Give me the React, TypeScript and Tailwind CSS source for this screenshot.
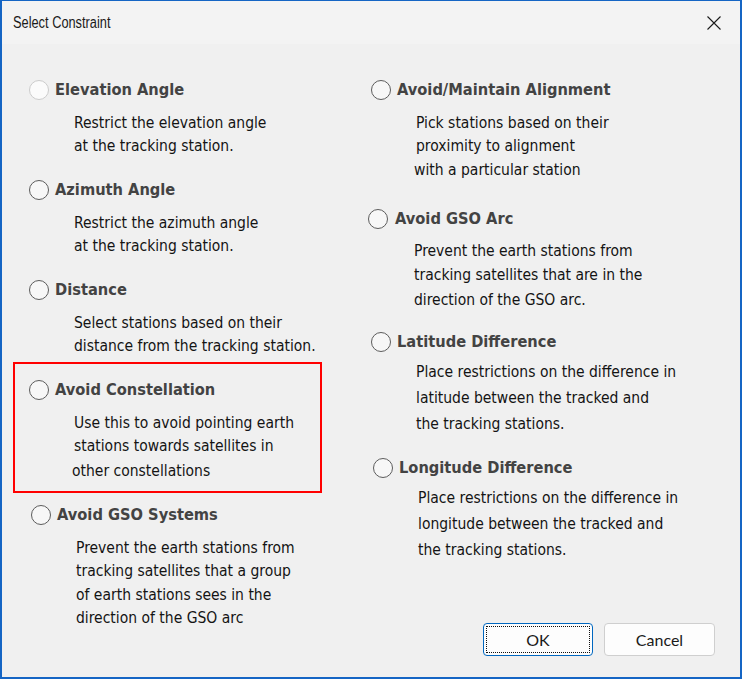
const body = "font-['DejaVu_Sans_Condensed','Liberation_Sans',sans-serif]";

function Radio({ disabled }: { disabled?: boolean }) {
  return (
    <span
      className={
        disabled
          ? "block w-[20px] h-[20px] shrink-0 rounded-full border border-[#cccccc] bg-[#fbfbfb]"
          : "block w-[20px] h-[20px] shrink-0 rounded-full border-[1.5px] border-[#5c5c5c] bg-[#f7f7f7]"
      }
    />
  );
}

function Title({ text, disabled, gap }: { text: string; disabled?: boolean; gap: string }) {
  return (
    <div className={`flex items-center h-[20px] ${gap}`}>
      <Radio disabled={disabled} />
      <span className="text-[16.3px] font-bold text-[#434343] whitespace-nowrap">{text}</span>
    </div>
  );
}

export default function App() {
  return (
    <div className={`w-[742px] h-[679px] flex flex-col bg-[#f0f0f0] border-t border-x-2 border-b-2 border-[#1565c4] ${body}`}>
      <div className="h-[43px] shrink-0 bg-[#f3f3f3] flex items-center justify-between pl-[11px] pr-[18px]">
        <span className="inline-block origin-left scale-x-[0.8] font-['Liberation_Sans',sans-serif] text-[16px] text-[#1a1a1a] whitespace-nowrap">
          Select Constraint
        </span>
        <svg width="16" height="16" viewBox="0 0 16 16" className="text-[#1a1a1a]">
          <path d="M1.5 1.5 L14.5 14.5 M14.5 1.5 L1.5 14.5" stroke="currentColor" strokeWidth="1.1" fill="none" />
        </svg>
      </div>

      <div className="flex flex-1 text-[15.5px] text-[#141414]">
        {/* left column */}
        <div className="relative w-[340px] pl-[27px]">
          <div className="mt-[36px]">
            <Title text="Elevation Angle" disabled gap="gap-[6px]" />
            <div className="mt-[12px] pl-[45px] leading-[23px]">
              <div>Restrict the elevation angle</div>
              <div>at the tracking station.</div>
            </div>
          </div>

          <div className="mt-[22px]">
            <Title text="Azimuth Angle" gap="gap-[6px]" />
            <div className="mt-[12px] pl-[45px] leading-[23px]">
              <div>Restrict the azimuth angle</div>
              <div>at the tracking station.</div>
            </div>
          </div>

          <div className="mt-[22px]">
            <Title text="Distance" gap="gap-[6px]" />
            <div className="mt-[12px] pl-[45px] leading-[23px]">
              <div>Select stations based on their</div>
              <div>distance from the tracking station.</div>
            </div>
          </div>

          <div className="mt-[22px]">
            <Title text="Avoid Constellation" gap="gap-[6px]" />
            <div className="mt-[12px] leading-[23px]">
              <div className="pl-[45px]">Use this to avoid pointing earth</div>
              <div className="pl-[45px]">stations towards satellites in</div>
              <div className="pl-[43px] leading-[27px]">other constellations</div>
            </div>
          </div>

          <div className="mt-[20px] pl-[2px]">
            <Title text="Avoid GSO Systems" gap="gap-[6px]" />
            <div className="mt-[12px] pl-[45px] leading-[23.7px]">
              <div className="leading-[23px]">Prevent the earth stations from</div>
              <div>tracking satellites that a group</div>
              <div>of earth stations sees in the</div>
              <div>direction of the GSO arc</div>
            </div>
          </div>

          {/* highlight frame drawn over the dialog */}
          <div className="absolute left-[11px] top-[318px] w-[309px] h-[131px] border-2 border-[#ff0000]" />
        </div>

        {/* right column */}
        <div className="flex-1 flex flex-col pl-[26px]">
          <div className="mt-[36px] pl-[3px]">
            <Title text="Avoid/Maintain Alignment" gap="gap-[6px]" />
            <div className="mt-[12px] leading-[23px]">
              <div className="pl-[45px]">Pick stations based on their</div>
              <div className="pl-[45px]">proximity to alignment</div>
              <div className="pl-[43px] leading-[25px]">with a particular station</div>
            </div>
          </div>

          <div className="mt-[26px]">
            <Title text="Avoid GSO Arc" gap="gap-[7px]" />
            <div className="mt-[10px] pl-[46px] leading-[24px]">
              <div>Prevent the earth stations from</div>
              <div>tracking satellites that are in the</div>
              <div className="leading-[26px]">direction of the GSO arc.</div>
            </div>
          </div>

          <div className="mt-[19px] pl-[3px]">
            <Title text="Latitude Difference" gap="gap-[6px]" />
            <div className="mt-[7px] pl-[45px] leading-[26px]">
              <div>Place restrictions on the difference in</div>
              <div>latitude between the tracked and</div>
              <div>the tracking stations.</div>
            </div>
          </div>

          <div className="mt-[21px] pl-[5px]">
            <Title text="Longitude Difference" gap="gap-[6px]" />
            <div className="mt-[7px] pl-[45px] leading-[26px]">
              <div>Place restrictions on the difference in</div>
              <div>longitude between the tracked and</div>
              <div>the tracking stations.</div>
            </div>
          </div>

          <div className="mt-[60px] flex justify-end gap-[11px] pr-[25px] font-['Lato',sans-serif] text-[16px] text-[#1a1a1a]">
            <button className="w-[110px] h-[33px] rounded-[4px] border border-[#0067c0] bg-[#fdfdfd] p-[2px]">
              <span className="flex items-center justify-center h-full border border-dotted border-[#111]">OK</span>
            </button>
            <button className="w-[111px] h-[33px] rounded-[4px] border border-[#cfcfcf] bg-[#fdfdfd]">Cancel</button>
          </div>
        </div>
      </div>
    </div>
  );
}
